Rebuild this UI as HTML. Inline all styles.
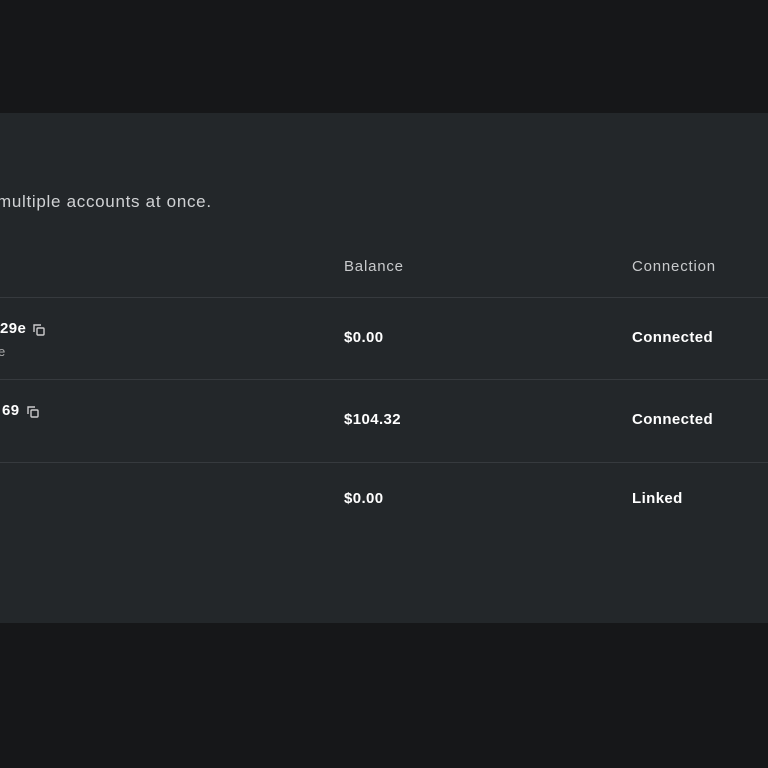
<!DOCTYPE html>
<html><head><style>
body{margin:0;width:768px;height:768px;background:#161719;overflow:hidden;font-family:"Liberation Sans",sans-serif;position:relative}
.panel{position:absolute;left:0;top:113px;width:768px;height:510px;background:#23272a}
.t{position:absolute;white-space:nowrap}
.line{position:absolute;left:0;width:768px;height:1px;background:#363a3e}
.b{color:#fff;font-weight:bold;font-size:15px;letter-spacing:0.4px}
.h{color:#c8cacc;font-size:15px;letter-spacing:0.8px}
.s{color:#aaa;font-size:13px}
</style></head><body>
<div class="panel">
<div class="t" style="left:-3px;top:79px;color:#d0d2d4;font-size:17px;letter-spacing:0.7px">multiple accounts at once.</div>
<div class="t h" style="left:344px;top:145px">Balance</div>
<div class="t h" style="left:632px;top:145px">Connection</div>
<div class="line" style="top:184px"></div>
<div class="t b" style="left:0;top:207px">29e</div>
<svg style="position:absolute;left:32px;top:210px" width="14" height="14" viewBox="0 0 14 14" fill="none" stroke="#ccc" stroke-width="1.4"><path d="M2 9V2h7"/><rect x="5" y="5" width="7" height="7" rx="1"/></svg>
<div class="t s" style="left:-2px;top:231px">e</div>
<div class="t b" style="left:344px;top:216px">$0.00</div>
<div class="t b" style="left:632px;top:216px">Connected</div>
<div class="line" style="top:266px"></div>
<div class="t b" style="left:2px;top:289px">69</div>
<svg style="position:absolute;left:26px;top:292px" width="14" height="14" viewBox="0 0 14 14" fill="none" stroke="#ccc" stroke-width="1.4"><path d="M2 9V2h7"/><rect x="5" y="5" width="7" height="7" rx="1"/></svg>
<div class="t b" style="left:344px;top:298px">$104.32</div>
<div class="t b" style="left:632px;top:298px">Connected</div>
<div class="line" style="top:349px"></div>
<div class="t b" style="left:344px;top:377px">$0.00</div>
<div class="t b" style="left:632px;top:377px">Linked</div>
</div>
</body></html>
